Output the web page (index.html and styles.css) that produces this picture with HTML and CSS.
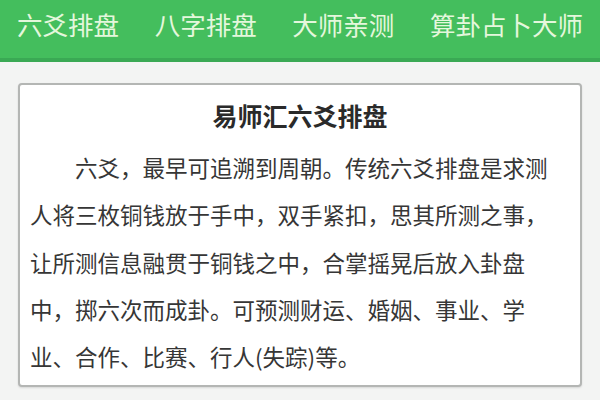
FILE: index.html
```html
<!DOCTYPE html>
<html lang="zh-CN">
<head>
<meta charset="utf-8">
<title>易师汇六爻排盘</title>
<link rel="stylesheet" href="styles.css">
</head>
<body>
<nav class="topnav">
  <a class="nav-item">六爻排盘</a>
  <a class="nav-item">八字排盘</a>
  <a class="nav-item">大师亲测</a>
  <a class="nav-item">算卦占卜大师</a>
</nav>
<main class="page">
  <section class="card">
    <h1 class="card-title">易师汇六爻排盘</h1>
    <p class="card-text">六爻，最早可追溯到周朝。传统六爻排盘是求测人将三枚铜钱放于手中，双手紧扣，思其所测之事，让所测信息融贯于铜钱之中，合掌摇晃后放入卦盘中，掷六次而成卦。可预测财运、婚姻、事业、学业、合作、比赛、行人(失踪)等。</p>
  </section>
</main>
</body>
</html>
```

FILE: styles.css
```css
html, body {
  margin: 0;
  padding: 0;
}
body {
  width: 600px;
  height: 400px;
  overflow: hidden;
  background: #f3f4f3;
  font-family: "Noto Sans CJK SC", "Noto Sans", sans-serif;
}
.topnav {
  display: flex;
  justify-content: space-between;
  align-items: center;
  height: 62px;
  padding: 0 17px 10px 17px;
  box-sizing: border-box;
  background: #44be5d;
  border-bottom: 4px solid #3aa954;
}
.nav-item {
  color: #e4f7dc;
  font-size: 25.5px;
  line-height: 30px;
  white-space: nowrap;
}
.page {
  padding: 21px 18px 0 18px;
}
.card {
  background: #ffffff;
  border: 2px solid #b4b6b4;
  border-radius: 4px;
  box-shadow: 0 1px 2px rgba(0,0,0,0.12);
  padding: 7px 30px 4px 10px;
  height: 304px;
  box-sizing: border-box;
}
.card-title {
  margin: 0 0 5px 0;
  padding-left: 20px;
  text-align: center;
  font-size: 25px;
  font-weight: bold;
  line-height: 47px;
  color: #2a2a2a;
}
.card-text {
  margin: 0;
  width: 520px;
  font-size: 22.5px;
  line-height: 47.3px;
  text-indent: 2em;
  color: #363636;
}
```
